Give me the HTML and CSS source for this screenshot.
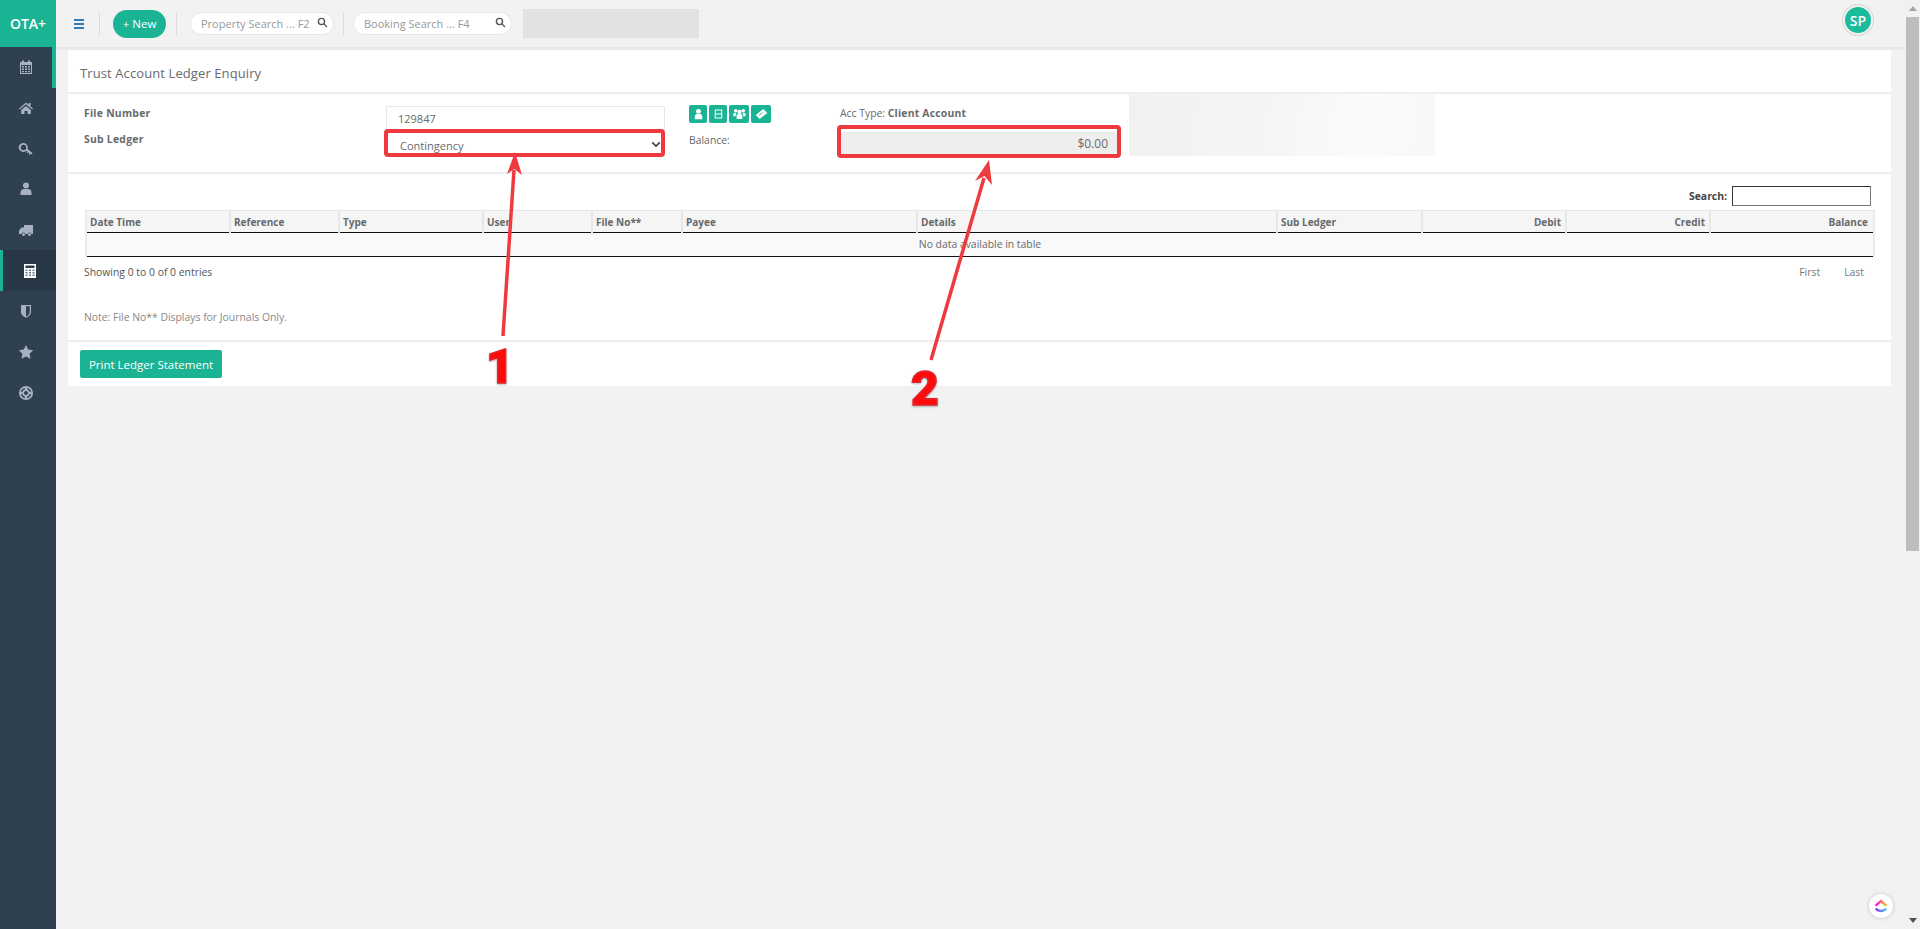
FILE: index.html
```html
<!DOCTYPE html>
<html>
<head>
  <meta charset="utf-8">
  <title>Trust Account Ledger Enquiry</title>
  <link rel="stylesheet" href="styles.css">
</head>
<body>
  <div class="app">
    <aside class="sidebar">
      <div class="brand">OTA+</div>
      <nav>
        <a class="nav-item first">
          <svg viewBox="0 0 16 16"><path d="M2 3h2V1.500h2V3h4V1.500h2V3h2v12H2zM3 6v8h10V6zM4 7h2v1.500H4zM7 7h2v1.500H7zM10 7h2v1.500h-2zM4 9.500h2V11H4zM7 9.500h2V11H7zM10 9.500h2V11h-2zM4 12h2v1.200H4zM7 12h2v1.200H7zM10 12h2v1.200h-2z" fill-rule="evenodd"/></svg>
        </a>
        <a class="nav-item">
          <svg viewBox="0 0 16 16"><path d="M8 2.500 1 8.500l.8 1L8 4.300l6.200 5.200.8-1-2.500-2.100V3h-2v1.700zM3.200 10 8 6l4.800 4v4H9.500v-3h-3v3H3.200z"/></svg>
        </a>
        <a class="nav-item">
          <svg viewBox="0 0 16 16"><path d="M5.500 2a4.500 4.500 0 0 1 4.100 6l4.900 4-.9 1.500-1-.7-.8 1.100-1.100-.8.700-1.100-1-.7-.7 1-1.100-.8.700-1.100-1-.6A4.500 4.500 0 1 1 5.500 2zm0 1.800a2.700 2.700 0 1 0 0 5.400 2.700 2.700 0 0 0 0-5.400z" fill-rule="evenodd"/></svg>
        </a>
        <a class="nav-item">
          <svg viewBox="0 0 16 16"><circle cx="8" cy="4.500" r="3"/><path d="M2.500 14v-2.500c0-2 1.500-3.300 3-3.500h5c1.500.2 3 1.500 3 3.500V14z"/></svg>
        </a>
        <a class="nav-item">
          <svg viewBox="0 0 16 16"><path d="M6 3h9v9h-1.600a2 2 0 0 0-3.800 0H7.400a2 2 0 0 0-3.800 0H1V8.500L3.500 5.500H6z"/><circle cx="5.500" cy="12.500" r="1.500"/><circle cx="11.500" cy="12.500" r="1.500"/></svg>
        </a>
        <a class="nav-item active">
          <svg viewBox="0 0 16 16"><path d="M2 1h12v14H2z" fill="#fff"/><path d="M3.500 2.500h9V5h-9z" fill="#2b3a49"/><path d="M3.500 6.500h2v1.500h-2zM7 6.500h2v1.500H7zM10.500 6.500h2v1.500h-2zM3.500 9h2v1.500h-2zM7 9h2v1.500H7zM10.500 9h2v1.500h-2zM3.500 11.500h2V13h-2zM7 11.500h2V13H7zM10.500 11.500h2V13h-2z" fill="#6d7888"/></svg>
        </a>
        <a class="nav-item">
          <svg viewBox="0 0 16 16"><path d="M3 2h10v7c0 3-2.500 4.500-5 5.800C5.500 13.500 3 12 3 9zm5 1.200v10.300c2-1.100 3.800-2.300 3.800-4.500V3.200z" fill-rule="evenodd"/></svg>
        </a>
        <a class="nav-item">
          <svg viewBox="0 0 16 16"><path d="m8 1 2.200 4.600 5 .7-3.600 3.500.9 5L8 12.400l-4.500 2.400.9-5L.8 6.300l5-.7z"/></svg>
        </a>
        <a class="nav-item">
          <svg class="ring" viewBox="0 0 16 16"><circle cx="8" cy="8" r="6.200"/><circle cx="8" cy="8" r="2.800"/><path d="M8 2v3M8 11v3M2 8h3M11 8h3" stroke-width="2.400"/></svg>
        </a>
      </nav>
    </aside>

    <div class="main">
      <header class="topbar">
        <span class="hamburger"><i></i><i></i><i></i></span>
        <span class="divider"></span>
        <button class="new-btn">+ New</button>
        <span class="divider"></span>
        <div class="pill pill-property">
          <span>Property Search ... F2</span>
          <svg viewBox="0 0 16 16"><circle cx="6.500" cy="6.500" r="4.500"/><path d="m10 10 4.500 4.500"/></svg>
        </div>
        <span class="divider"></span>
        <div class="pill pill-booking">
          <span>Booking Search ... F4</span>
          <svg viewBox="0 0 16 16"><circle cx="6.500" cy="6.500" r="4.500"/><path d="m10 10 4.500 4.500"/></svg>
        </div>
        <div class="blur-top"></div>
        <div class="avatar">SP</div>
      </header>

      <div class="content">
        <section class="panel">
          <div class="panel-title">Trust Account Ledger Enquiry</div>

          <div class="enquiry">
            <label class="field-label">File Number</label>
            <div class="file-input">129847</div>
            <div class="action-btns">
              <span class="mini-btn">
                <svg viewBox="0 0 16 16"><circle cx="8" cy="4.500" r="3.300"/><path d="M3 15v-3.500C3 9.500 4.500 8.400 5.500 8h5c1 .4 2.500 1.500 2.500 3.500V15z"/></svg>
              </span>
              <span class="mini-btn">
                <svg viewBox="0 0 16 16"><path d="M3 2h10v12H3zm1.300 1.300v4h7.400v-4zm0 5.400v4h7.400v-4z" fill-rule="evenodd"/></svg>
              </span>
              <span class="mini-btn wide">
                <svg viewBox="0 0 18 16"><circle cx="9" cy="5" r="3"/><circle cx="3.800" cy="3.500" r="2.400"/><circle cx="14.200" cy="3.500" r="2.400"/><path d="M5 15v-4.500C5 9 6 8 7 8h4c1 0 2 1 2 2.500V15zM.5 11V7.500C.5 7 1 6.500 1.500 6.500h3.300C4 7.500 3.800 9 3.800 11zM17.500 11V7.500c0-.5-.5-1-1-1h-3.300c.8 1 1 2.500 1 4.500z"/></svg>
              </span>
              <span class="mini-btn wide">
                <svg viewBox="0 0 18 16"><path d="M11.500 1 17 6.500 6.500 15 1 9.500zM10 5.500 5.500 9.300l.7.7L10.700 6.200z" fill-rule="evenodd"/></svg>
              </span>
            </div>
            <div class="acc-type">Acc Type: <b>Client Account</b></div>
            <div class="blur-box"></div>

            <label class="field-label second">Sub Ledger</label>
            <div class="select-box">
              <span>Contingency</span>
              <svg viewBox="0 0 12 8"><path d="m1.500 1.500 4.500 4.500 4.500-4.500"/></svg>
            </div>
            <div class="balance-label">Balance:</div>
            <div class="balance-box">$0.00</div>
          </div>

          <div class="ledger">
            <div class="search-row">
              <label>Search:</label>
              <span class="search-input"></span>
            </div>
            <table class="ledger-table">
              <colgroup>
                <col class="c-date"><col class="c-ref"><col class="c-type"><col class="c-user"><col class="c-file"><col class="c-payee"><col class="c-details"><col class="c-sub"><col class="c-money"><col class="c-money"><col class="c-last">
              </colgroup>
              <thead>
                <tr>
                  <th>Date Time</th><th>Reference</th><th>Type</th><th>User</th><th>File No**</th><th>Payee</th><th>Details</th><th>Sub Ledger</th><th class="num">Debit</th><th class="num">Credit</th><th class="num">Balance</th>
                </tr>
              </thead>
              <tbody>
                <tr><td colspan="11">No data available in table</td></tr>
              </tbody>
            </table>
            <div class="table-foot">
              <span>Showing 0 to 0 of 0 entries</span>
              <span class="pager"><a>First</a><a>Last</a></span>
            </div>
            <p class="note">Note: File No** Displays for Journals Only.</p>
          </div>

          <div class="panel-foot">
            <button class="print-btn">Print Ledger Statement</button>
          </div>
        </section>
      </div>
    </div>

    <div class="scrollbar">
      <span class="arrow-up"></span>
      <span class="thumb"></span>
      <span class="arrow-down"></span>
    </div>
  </div>

  <!-- callouts drawn on top of the screenshot -->
  <svg class="callouts" viewBox="0 0 1920 929">
    <rect class="box" x="386" y="131" width="277" height="24" rx="2"/>
    <rect class="box" x="839" y="127" width="280" height="29" rx="2"/>
    <path class="shaft" d="M503 336 514 170"/>
    <path class="head" d="M515 152 522 175 514.500 169 507 174z"/>
    <path class="shaft" d="M931 360 984 178"/>
    <path class="head" d="M989 160 992 185 984.500 176 975 181z"/>
    <text class="digit" x="500" y="383">1</text>
    <text class="digit" x="925" y="405">2</text>
  </svg>

  <div class="clickup">
    <svg viewBox="0 0 20 20">
      <defs>
        <linearGradient id="cu-top" x1="0" x2="1"><stop offset="0" stop-color="#ff02f0"/><stop offset="1" stop-color="#ffc800"/></linearGradient>
        <linearGradient id="cu-bot" x1="0" x2="1"><stop offset="0" stop-color="#8930fd"/><stop offset="1" stop-color="#49ccf9"/></linearGradient>
      </defs>
      <path d="M4 9.500 10 4.500l6 5" fill="none" stroke="url(#cu-top)" stroke-width="2.600"/>
      <path d="M4 13c3.500 3.400 8.500 3.400 12 0" fill="none" stroke="url(#cu-bot)" stroke-width="2.600"/>
    </svg>
  </div>
</body>
</html>
```

FILE: styles.css
```css
* {
  box-sizing: border-box;
}

html, body {
  margin: 0;
  height: 100%;
  overflow: hidden;
}

body {
  position: relative;
  font-family: "Open Sans", "Liberation Sans", sans-serif;
  font-size: 10.400px;
  color: #676a6c;
  background: #f2f2f2;
}

.app {
  display: flex;
  height: 929px;
}

/* sidebar */
.sidebar {
  width: 56px;
  flex-shrink: 0;
  background: #2f4050;
}

.brand {
  height: 47px;
  display: flex;
  align-items: center;
  justify-content: center;
  background: #1ab394;
  color: #fff;
  font-size: 14px;
  font-weight: 600;
}

.nav-item {
  display: flex;
  align-items: center;
  justify-content: center;
  height: 40.700px;
  padding-right: 4px;
}

.nav-item svg {
  width: 16px;
  height: 16px;
  fill: #a7b1c2;
}

.nav-item svg.ring {
  fill: none;
  stroke: #a7b1c2;
  stroke-width: 1.700;
}

.nav-item.first {
  border-right: 4px solid #1ab394;
  padding-right: 0;
}

.nav-item.active {
  background: #293846;
  border-left: 3px solid #1ab394;
  padding-right: 0;
}

/* top bar */
.main {
  flex: 1;
  min-width: 0;
}

.topbar {
  position: relative;
  display: flex;
  align-items: center;
  height: 50px;
  border-bottom: 3px solid #e7eaec;
  background: #f2f2f2;
}

.hamburger {
  display: flex;
  flex-direction: column;
  gap: 2px;
  width: 10px;
  margin-left: 18px;
}

.hamburger i {
  height: 2px;
  background: #337ab7;
}

.divider {
  width: 1px;
  height: 24px;
  background: #dcdcdc;
}

.topbar .hamburger + .divider {
  margin-left: 15px;
}

.new-btn {
  width: 53px;
  height: 28px;
  margin: 0 10px 0 13px;
  padding: 0;
  border: 0;
  border-radius: 14px;
  background: #1ab394;
  color: #fff;
  font: 400 11.500px "Open Sans", sans-serif;
}

.pill {
  display: flex;
  align-items: center;
  justify-content: space-between;
  height: 23px;
  padding: 0 5px 0 10px;
  border: 1px solid #e5e6e7;
  border-radius: 12px;
  background: #fff;
  color: #999;
  font-size: 11px;
}

.pill svg {
  width: 11px;
  height: 11px;
  margin-bottom: 2px;
  fill: none;
  stroke: #555;
  stroke-width: 2;
}

.pill-property {
  width: 144px;
  margin: 0 9px 0 13px;
}

.pill-booking {
  width: 159px;
  margin-left: 9px;
}

.blur-top {
  width: 176px;
  height: 29px;
  margin: 0 0 1px 11px;
  background: #e2e2e2;
}

.avatar {
  position: absolute;
  top: 5px;
  right: 32px;
  width: 30px;
  height: 30px;
  display: flex;
  align-items: center;
  justify-content: center;
  border: 2px solid #f2f2f2;
  border-radius: 50%;
  box-shadow: 0 0 0 1px #d4d4d4;
  background: #1abc9c;
  color: #fff;
  font-size: 14px;
  font-weight: 600;
}

/* panel */
.content {
  padding: 0 14px 0 12px;
}

.panel {
  background: #fff;
}

.panel-title {
  height: 44px;
  padding: 14px 12px 0;
  border-bottom: 2px solid #eee;
  font-size: 13px;
  line-height: 18px;
  letter-spacing: 0.100px;
}

.enquiry {
  display: grid;
  grid-template-columns: 302px 279px 172px 284px 306px;
  grid-template-rows: 23px 24px;
  column-gap: 0;
  height: 80px;
  padding: 12px 0 0 16px;
  border-bottom: 2px solid #eee;
}

.field-label {
  font-weight: 700;
  line-height: 14px;
  letter-spacing: 0.250px;
}

.field-label.second {
  margin-top: 3px;
}

.file-input {
  height: 24px;
  padding: 4px 11px;
  border: 1px solid #e5e6e7;
  font-size: 11px;
  line-height: 16px;
}

.select-box {
  position: relative;
  height: 24px;
  margin-top: 3px;
  padding: 6px 14px 0;
  overflow: hidden;
  font-size: 11px;
  line-height: 16px;
}

.select-box svg {
  position: absolute;
  right: 4px;
  top: 9px;
  width: 10px;
  height: 7px;
  fill: none;
  stroke: #444;
  stroke-width: 2;
}

.action-btns {
  display: flex;
  gap: 2px;
  height: 18px;
  margin: -1px 0 0 24px;
}

.mini-btn {
  display: flex;
  align-items: center;
  justify-content: center;
  width: 18px;
  height: 18px;
  border-radius: 2px;
  background: #1ab394;
}

.mini-btn.wide {
  width: 20px;
}

.mini-btn svg {
  width: 13px;
  height: 12px;
  fill: #fff;
}

.acc-type {
  padding-left: 3px;
  line-height: 14px;
}

.acc-type b {
  font-weight: 700;
  letter-spacing: 0.200px;
}

.blur-box {
  grid-row: span 2;
  width: 306px;
  height: 62px;
  margin: -12px 0 0 8px;
  background: linear-gradient(100deg, #f1f1f1 0%, #f5f5f5 45%, #fbfbfb 75%, #f8f8f8 100%);
}

.balance-label {
  margin-top: 4px;
  padding-left: 24px;
  line-height: 14px;
}

.balance-box {
  height: 24px;
  margin: 3px 0 0 2px;
  padding-right: 13px;
  background: #eee;
  font-size: 12px;
  line-height: 23px;
  text-align: right;
}

/* table */
.ledger {
  height: 168px;
  padding: 12px 18px 0 17px;
  border-bottom: 2px solid #eee;
}

.search-row {
  display: flex;
  justify-content: flex-end;
  align-items: center;
  gap: 5px;
  height: 20px;
  padding-right: 2px;
  margin-bottom: 4px;
  color: #444;
  font-weight: 700;
}

.search-input {
  width: 139px;
  height: 20px;
  border: 1px solid #333;
  border-color: #333 #767676 #767676 #333;
}

.ledger-table {
  width: 1788px;
  table-layout: fixed;
  border-collapse: collapse;
  border-left: 2px solid #eaeaea;
  border-right: 2px solid #eaeaea;
}

.c-date { width: 144px; }
.c-ref { width: 109px; }
.c-type { width: 144px; }
.c-user { width: 109px; }
.c-file { width: 90px; }
.c-payee { width: 235px; }
.c-details { width: 360px; }
.c-sub { width: 145px; }
.c-money { width: 144px; }
.c-last { width: 164px; }

.ledger-table th {
  height: 22px;
  padding: 0 4px 0 3px;
  border-top: 1px solid #e7e7e7;
  border-right: 2px solid #e7e7e7;
  border-bottom: 1px solid #111;
  background: #f5f5f5;
  font-size: 10px;
  font-weight: 700;
  text-align: left;
  white-space: nowrap;
}

.ledger-table th:last-child {
  border-right: 0;
  padding-right: 5px;
}

.ledger-table th.num {
  text-align: right;
}

.ledger-table td {
  height: 24px;
  padding-bottom: 2px;
  border-bottom: 1px solid #111;
  background: #f9f9f9;
  font-size: 10.400px;
  text-align: center;
}

.table-foot {
  display: flex;
  justify-content: space-between;
  align-items: center;
  height: 14px;
  margin: 8px 0 0 -1px;
  padding-right: 9px;
  color: #555;
}

.pager {
  display: flex;
  gap: 24px;
  color: #777;
}

.note {
  margin: 31px 0 0 -1px;
  line-height: 14px;
  color: #888;
}

.panel-foot {
  height: 44px;
  padding: 8px 12px 0;
}

.print-btn {
  display: block;
  width: 142px;
  height: 28px;
  padding: 0;
  border: 0;
  border-radius: 2px;
  background: #1ab394;
  color: #fff;
  font: 400 11.500px "Open Sans", sans-serif;
}

/* scrollbar */
.scrollbar {
  display: flex;
  flex-direction: column;
  align-items: center;
  width: 15px;
  flex-shrink: 0;
  background: #f1f1f1;
}

.arrow-up {
  width: 0;
  height: 0;
  margin-top: 6px;
  border: 4px solid transparent;
  border-top: 0;
  border-bottom: 5px solid #a3a3a3;
}

.thumb {
  width: 13px;
  height: 534px;
  margin-top: 6px;
  background: #bdbdbd;
}

.arrow-down {
  width: 0;
  height: 0;
  margin-top: auto;
  margin-bottom: 6px;
  border: 4px solid transparent;
  border-bottom: 0;
  border-top: 5px solid #505050;
}

/* callouts */
.callouts {
  position: absolute;
  left: 0;
  top: 0;
  width: 1920px;
  height: 929px;
  pointer-events: none;
}

.box {
  fill: none;
  stroke: #ee3a3f;
  stroke-width: 4;
}

.shaft {
  stroke: #ee3a3f;
  stroke-width: 3.500;
  fill: none;
}

.head {
  fill: #ee3a3f;
}

.digit {
  font-family: Roboto, "Liberation Sans", sans-serif;
  font-size: 48px;
  font-weight: 900;
  text-anchor: middle;
  fill: #ff0a0a;
  stroke: #e0252a;
  stroke-width: 1.500px;
  filter: drop-shadow(0 1px 1px rgba(0, 0, 0, 0.3));
}

.clickup {
  position: absolute;
  left: 1869px;
  top: 894px;
  width: 24px;
  height: 24px;
  padding: 3px;
  border-radius: 50%;
  background: #fff;
  box-shadow: 0 0 4px rgba(0, 0, 0, 0.2);
}

.clickup svg {
  display: block;
  width: 18px;
  height: 18px;
}
```
